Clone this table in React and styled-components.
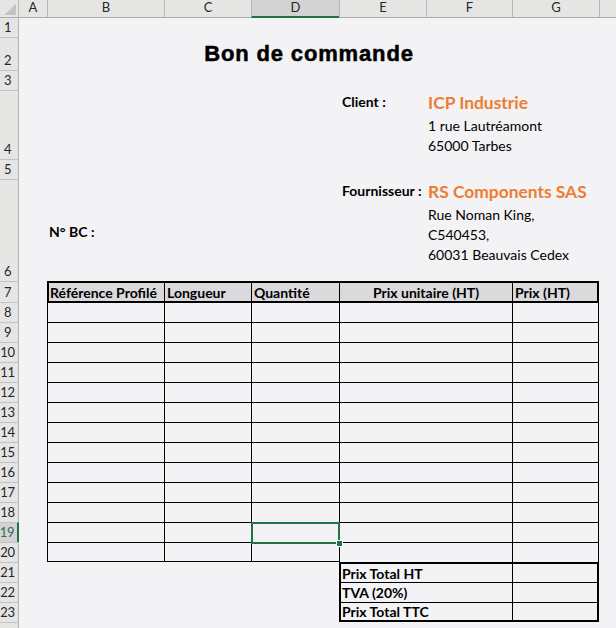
import React from 'react';
import styled, { createGlobalStyle } from 'styled-components';

const Global = createGlobalStyle`
  html, body { margin: 0; padding: 0; background: #f3f2f5; overflow: hidden; }
  #root { width: 616px; height: 628px; }
`;

const FONT = `Lato, "Liberation Sans", sans-serif`;
const GREEN = '#217346';
const HEAD_BG = '#e5e6e4';
const HEAD_ACTIVE = '#d3d3d4';

const Sheet = styled.div`
  display: grid;
  grid-template-columns: 19px 28px 117px 87px 88px 87px 86px 87px 1fr;
  grid-template-rows: 18px 19px 33px 20px 69px 20px 102px 21px repeat(17, 20px);
  width: 616px;
  height: 628px;
  overflow: hidden;
  background: #f3f2f5;
  font-family: ${FONT};
  color: #000;
`;

const Corner = styled.div`
  grid-column: 1;
  grid-row: 1;
  position: relative;
  background: ${HEAD_BG};
  border-right: 1px solid #b5b5b5;
  border-bottom: 1px solid #ababab;
  &::after {
    content: '';
    position: absolute;
    right: 2px;
    bottom: 2px;
    border-left: 12px solid transparent;
    border-bottom: 11px solid #c3c3c3;
  }
`;

const ColHead = styled.div`
  grid-row: 1;
  grid-column: ${(p) => p.$col};
  display: flex;
  align-items: center;
  justify-content: center;
  padding-bottom: ${(p) => (p.$active ? '2px' : '3px')};
  background: ${(p) => (p.$active ? HEAD_ACTIVE : HEAD_BG)};
  border-left: ${(p) => (p.$first ? 'none' : '1px solid #b7b7b7')};
  border-bottom: ${(p) => (p.$active ? `2px solid ${GREEN}` : '1px solid #ababab')};
  font-size: 13px;
  color: #262626;
`;

const RowHead = styled.div`
  grid-column: 1;
  grid-row: ${(p) => p.$row + 1};
  display: flex;
  align-items: flex-end;
  justify-content: center;
  padding-right: 3px;
  line-height: 19px;
  overflow: hidden;
  background: ${(p) => (p.$active ? HEAD_ACTIVE : HEAD_BG)};
  border-right: ${(p) => (p.$active ? `2px solid ${GREEN}` : '1px solid #b5b5b5')};
  border-top: ${(p) => (p.$row === 1 ? 'none' : '1px solid #c2c2c2')};
  font-size: 13px;
  letter-spacing: -0.4px;
  color: ${(p) => (p.$active ? '#2f6e4e' : '#262626')};
`;

const Title = styled.div`
  grid-column: 2 / 9;
  grid-row: 3;
  display: flex;
  align-items: center;
  justify-content: center;
  font-family: "Liberation Sans", Arial, sans-serif;
  font-weight: 700;
  font-size: 22px;
  letter-spacing: 0.85px;
  -webkit-text-stroke: 0.5px #000;
`;

const Label = styled.div`
  grid-column: ${(p) => p.$col};
  grid-row: ${(p) => p.$row + 1};
  align-self: ${(p) => p.$align || 'start'};
  padding: ${(p) => p.$pad || '0 3px'};
  font-size: 14px;
  font-weight: 700;
  line-height: 24px;
  white-space: nowrap;
`;

const Party = styled.div`
  grid-column: 7 / 9;
  grid-row: ${(p) => p.$row + 1};
  display: flex;
  flex-direction: column;
  padding-left: 2px;
  white-space: nowrap;
`;

const PartyName = styled.div`
  color: #ed7d31;
  font-weight: 700;
  font-size: 17.4px;
  line-height: 26px;
`;

const AddressLine = styled.div`
  font-size: 14px;
  line-height: 20px;
`;

const Cell = styled.div`
  grid-column: ${(p) => p.$col};
  grid-row: ${(p) => p.$row + 1};
  position: relative;
  display: flex;
  align-items: center;
  justify-content: ${(p) => (p.$center ? 'center' : 'flex-start')};
  padding: 0 2px;
  font-size: 14px;
  white-space: nowrap;
  border-left: 1px solid #000;
  border-top: 1px solid #000;
  border-right: ${(p) => (p.$last ? '1px solid #000' : 'none')};
  border-bottom: ${(p) => (p.$bottom ? '1px solid #000' : 'none')};
`;

const HeadCell = styled(Cell)`
  background: #dad9dc;
  font-weight: 700;
  padding: 0 ${(p) => (p.$first ? '1px' : '2px')};
  border-top: 2px solid #000;
  border-bottom: 1px solid #000;
  border-left: ${(p) => (p.$first ? '2px' : '1px')} solid #000;
  border-right: ${(p) => (p.$last ? '2px solid #000' : 'none')};
`;

const TotalCell = styled(Cell)`
  font-weight: 700;
  padding: 0 1px;
  border-top: ${(p) => (p.$first ? '2px' : '1px')} solid #000;
  border-left: ${(p) => (p.$label ? '2px' : '1px')} solid #000;
  border-right: ${(p) => (p.$label ? 'none' : '2px solid #000')};
  border-bottom: ${(p) => (p.$bottom ? '2px solid #000' : 'none')};
`;

const Selection = styled.div`
  position: absolute;
  top: -1px;
  left: -1px;
  right: -1px;
  bottom: -2px;
  border: 2px solid ${GREEN};
  z-index: 2;
  pointer-events: none;
`;

const Handle = styled.div`
  position: absolute;
  right: -5px;
  bottom: -5px;
  width: 5px;
  height: 5px;
  background: ${GREEN};
  border: 1px solid #fff;
  z-index: 3;
`;

const COLS = ['A', 'B', 'C', 'D', 'E', 'F', 'G', 'H'];
const TABLE_COLS = [
  { col: 3, title: 'Référence Profilé' },
  { col: 4, title: 'Longueur' },
  { col: 5, title: 'Quantité' },
  { col: '6 / 8', title: 'Prix unitaire (HT)', center: true },
  { col: 8, title: 'Prix (HT)' },
];
const BODY_ROWS = Array.from({ length: 13 }, (_, i) => 8 + i);
const TOTALS = ['Prix Total HT', 'TVA (20%)', 'Prix Total TTC'];

export default function App() {
  return (
    <>
      <Global />
      <Sheet>
        <Corner />
        {COLS.map((c, i) => (
          <ColHead key={c} $col={i + 2} $first={i === 0} $active={c === 'D'}>
            {c === 'H' ? '' : c}
          </ColHead>
        ))}
        {Array.from({ length: 24 }, (_, i) => i + 1).map((r) => (
          <RowHead key={r} $row={r} $active={r === 19}>
            {r < 24 ? r : ''}
          </RowHead>
        ))}

        <Title>Bon de commande</Title>

        <Label $col={6} $row={4}>Client :</Label>
        <Party $row={4}>
          <PartyName>ICP Industrie</PartyName>
          <AddressLine>1 rue Lautréamont</AddressLine>
          <AddressLine>65000 Tarbes</AddressLine>
        </Party>

        <Label $col={3} $row={6} $align="center" $pad="4px 2px 0">N° BC :</Label>
        <Label $col={6} $row={6}>Fournisseur :</Label>
        <Party $row={6}>
          <PartyName>RS Components SAS</PartyName>
          <AddressLine>Rue Noman King,</AddressLine>
          <AddressLine>C540453,</AddressLine>
          <AddressLine>60031 Beauvais Cedex</AddressLine>
        </Party>

        {TABLE_COLS.map((c, i) => (
          <HeadCell
            key={c.title}
            $col={c.col}
            $row={7}
            $center={c.center}
            $first={i === 0}
            $last={i === TABLE_COLS.length - 1}
          >
            {c.title}
          </HeadCell>
        ))}

        {BODY_ROWS.map((r) =>
          TABLE_COLS.map((c, i) => (
            <Cell
              key={`${r}-${i}`}
              $col={c.col}
              $row={r}
              $last={i === TABLE_COLS.length - 1}
              $bottom={r === 20 && i < 3}
            >
              {r === 19 && i === 2 ? (
                <Selection>
                  <Handle />
                </Selection>
              ) : null}
            </Cell>
          ))
        )}

        {TOTALS.map((t, i) => (
          <React.Fragment key={t}>
            <TotalCell $col="6 / 8" $row={21 + i} $label $first={i === 0} $bottom={i === 2}>
              {t}
            </TotalCell>
            <TotalCell $col={8} $row={21 + i} $first={i === 0} $bottom={i === 2} />
          </React.Fragment>
        ))}
      </Sheet>
    </>
  );
}
